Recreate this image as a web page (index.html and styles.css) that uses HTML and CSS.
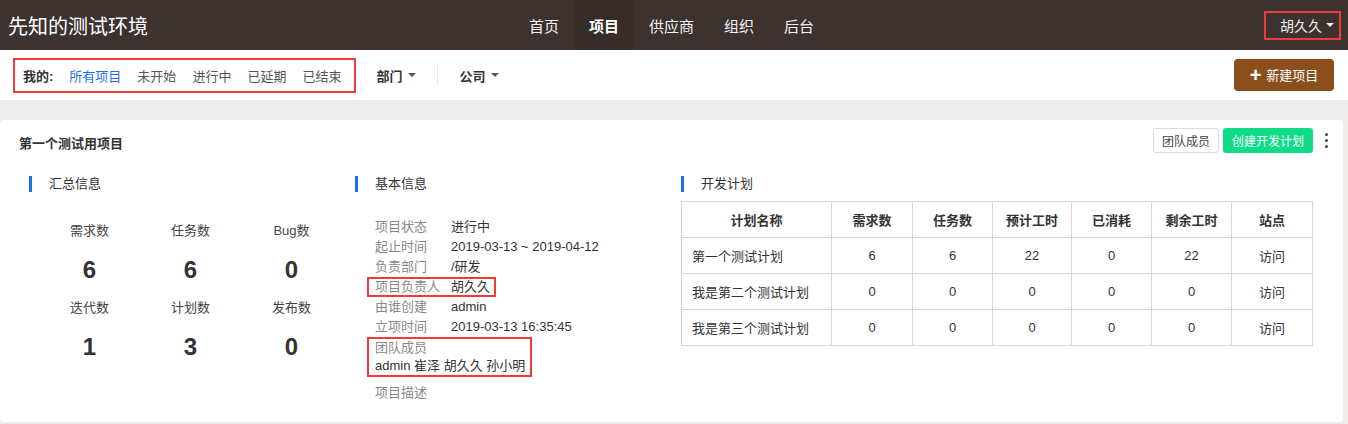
FILE: index.html
```html
<!DOCTYPE html>
<html lang="zh-CN">
<head>
    <meta charset="UTF-8">
    <title>先知的测试环境 - 项目</title>
    <link rel="stylesheet" href="styles.css">
</head>
<body>
    <header class="topbar">
        <div class="brand">先知的测试环境</div>
        <nav class="mainnav">
            <a>首页</a>
            <a class="active">项目</a>
            <a>供应商</a>
            <a>组织</a>
            <a>后台</a>
        </nav>
        <div class="user"><span class="user-box">胡久久<i class="caret"></i></span></div>
    </header>

    <div class="subbar">
        <div class="filter-box">
            <b>我的:</b>
            <a class="on">所有项目</a>
            <a>未开始</a>
            <a>进行中</a>
            <a>已延期</a>
            <a>已结束</a>
        </div>
        <div class="drop">部门<i class="caret dark"></i></div>
        <span class="divider"></span>
        <div class="drop">公司<i class="caret dark"></i></div>
        <button class="btn-new"><span class="plus">+</span>新建项目</button>
    </div>

    <div class="card">
        <div class="card-head">
            <h2>第一个测试用项目</h2>
            <div class="actions">
                <button class="btn-line">团队成员</button>
                <button class="btn-green">创建开发计划</button>
                <span class="kebab"><i></i><i></i><i></i></span>
            </div>
        </div>

        <div class="card-body">
            <section>
                <h3 class="sec">汇总信息</h3>
                <div class="stats">
                    <div class="stat"><span>需求数</span><b>6</b></div>
                    <div class="stat"><span>任务数</span><b>6</b></div>
                    <div class="stat"><span>Bug数</span><b>0</b></div>
                    <div class="stat"><span>迭代数</span><b>1</b></div>
                    <div class="stat"><span>计划数</span><b>3</b></div>
                    <div class="stat"><span>发布数</span><b>0</b></div>
                </div>
            </section>

            <section>
                <h3 class="sec">基本信息</h3>
                <div class="info">
                    <div class="row"><span class="k">项目状态</span><span class="v">进行中</span></div>
                    <div class="row"><span class="k">起止时间</span><span class="v">2019-03-13 ~ 2019-04-12</span></div>
                    <div class="row"><span class="k">负责部门</span><span class="v">/研发</span></div>
                    <div class="row hl"><span class="k">项目负责人</span><span class="v">胡久久</span></div>
                    <div class="row"><span class="k">由谁创建</span><span class="v">admin</span></div>
                    <div class="row"><span class="k">立项时间</span><span class="v">2019-03-13 16:35:45</span></div>
                    <div class="members hl">
                        <div class="k">团队成员</div>
                        <div class="v">admin 崔泽 胡久久 孙小明</div>
                    </div>
                    <div class="row desc"><span class="k">项目描述</span></div>
                </div>
            </section>

            <section>
                <h3 class="sec">开发计划</h3>
                <table class="plans">
                    <colgroup>
                        <col style="width:150px"><col style="width:81px"><col style="width:80px">
                        <col style="width:79px"><col style="width:80px"><col style="width:80px"><col>
                    </colgroup>
                    <thead>
                        <tr><th>计划名称</th><th>需求数</th><th>任务数</th><th>预计工时</th><th>已消耗</th><th>剩余工时</th><th>站点</th></tr>
                    </thead>
                    <tbody>
                        <tr><td class="name">第一个测试计划</td><td>6</td><td>6</td><td>22</td><td>0</td><td>22</td><td>访问</td></tr>
                        <tr><td class="name">我是第二个测试计划</td><td>0</td><td>0</td><td>0</td><td>0</td><td>0</td><td>访问</td></tr>
                        <tr><td class="name">我是第三个测试计划</td><td>0</td><td>0</td><td>0</td><td>0</td><td>0</td><td>访问</td></tr>
                    </tbody>
                </table>
            </section>
        </div>
    </div>
</body>
</html>
```

FILE: styles.css
```css
body {
    margin: 0;
    background-color: #efeeec;
    font-family: "Liberation Sans", "Noto Sans CJK SC", sans-serif;
    font-size: 13px;
    color: #333;
}
a {
    cursor: pointer;
}

/* top bar */
.topbar {
    display: grid;
    grid-template-columns: 1fr auto 1fr;
    align-items: center;
    height: 50px;
    background-color: #3c3230;
    color: #fff;
}
.brand {
    font-size: 20px;
    padding-left: 8px;
}
.mainnav {
    display: flex;
    height: 50px;
    margin-right: 5px;
}
.mainnav a {
    display: flex;
    align-items: center;
    padding: 0 15px;
    font-size: 15px;
    color: #f2f2f2;
}
.mainnav a.active {
    background-color: #362c2a;
    font-weight: bold;
    color: #fff;
}
.user {
    justify-self: end;
    padding-right: 7px;
}
.user-box {
    display: flex;
    align-items: center;
    height: 25px;
    padding: 0 5px 0 14px;
    border: 2px solid #f23a3a;
    font-size: 14px;
    color: #eee;
}
.caret {
    display: inline-block;
    margin-left: 4px;
    border-left: 4px solid transparent;
    border-right: 4px solid transparent;
    border-top: 4px solid #eee;
}
.caret.dark {
    margin-left: 6px;
    border-top-color: #555;
}

/* sub bar */
.subbar {
    display: flex;
    align-items: center;
    height: 50px;
    padding: 0 14px 0 13px;
    background-color: #fff;
}
.filter-box {
    display: flex;
    align-items: center;
    gap: 16px;
    height: 31px;
    padding: 0 13px 0 8px;
    border: 2px solid #f23a3a;
}
.filter-box a {
    color: #555;
}
.filter-box a.on {
    color: #1c6fe8;
}
.drop {
    display: flex;
    align-items: center;
    font-weight: bold;
    color: #333;
}
.filter-box + .drop {
    margin-left: 20px;
}
.divider {
    width: 1px;
    height: 20px;
    margin: 0 21px;
    background-color: #e6e6e6;
}
.btn-new {
    margin-left: auto;
    width: 100px;
    height: 32px;
    border: none;
    border-radius: 4px;
    background-color: #8b4f1d;
    color: #fff;
    font-family: inherit;
    font-size: 13px;
}
.btn-new .plus {
    font-size: 20px;
    font-weight: bold;
    margin-right: 5px;
    vertical-align: -2px;
}

/* card */
.card {
    margin: 20px 5px 0 0;
    min-height: 302px;
    border-radius: 4px;
    background-color: #fff;
}
.card-head {
    display: flex;
    align-items: center;
    justify-content: space-between;
    padding: 8px 15px 0 19px;
}
.card-head h2 {
    margin: 3px 0 0;
    font-size: 13px;
    font-weight: bold;
}
.actions {
    display: flex;
    align-items: center;
    gap: 4px;
}
.actions button {
    height: 25px;
    padding: 0 8px;
    border-radius: 3px;
    font-family: inherit;
    font-size: 12px;
}
.btn-line {
    border: 1px solid #dcdcdc;
    background-color: #fff;
    color: #444;
}
.btn-green {
    border: none;
    background-color: #10dc88;
    color: #fff;
}
.actions .btn-green {
    padding: 0 9px;
}
.kebab {
    display: flex;
    flex-direction: column;
    gap: 3px;
    margin-left: 8px;
}
.kebab i {
    width: 3px;
    height: 3px;
    border-radius: 50%;
    background-color: #444;
}

.card-body {
    display: grid;
    grid-template-columns: 326px 326px 1fr;
    padding: 23px 30px 19px 29px;
}
.sec {
    margin: 0;
    height: 16px;
    line-height: 16px;
    padding-left: 17px;
    border-left: 3px solid #1a6ef0;
    font-size: 13px;
    font-weight: normal;
    color: #333;
}

.stats {
    display: grid;
    grid-template-columns: repeat(3, 101px);
    row-gap: 13px;
    margin: 29px 0 0 10px;
    text-align: center;
}
.stat span {
    display: block;
    line-height: 20px;
    color: #444;
}
.stat b {
    display: block;
    margin-top: 14px;
    line-height: 30px;
    font-size: 24px;
    color: #333;
}

.info {
    margin-top: 25px;
    padding-left: 20px;
}
.row {
    display: flex;
    line-height: 20px;
}
.k {
    width: 76px;
    color: #888;
}
.v {
    color: #333;
}
.hl {
    width: fit-content;
    margin-left: -8px;
    padding: 0 4px 0 6px;
    border: 2px solid #f23a3a;
}
.row.hl {
    line-height: 16px;
}
.members {
    line-height: 18px;
    padding-right: 5px;
}
.members .k {
    width: auto;
}
.desc {
    margin-top: 6px;
}

.plans {
    margin-top: 9px;
    width: 632px;
    border-collapse: collapse;
    table-layout: fixed;
}
.plans th,
.plans td {
    height: 35px;
    padding: 0;
    border: 1px solid #d4d4dc;
    text-align: center;
    color: #333;
}
.plans th {
    font-weight: bold;
}
.plans td.name {
    text-align: left;
    padding-left: 10px;
}
```
